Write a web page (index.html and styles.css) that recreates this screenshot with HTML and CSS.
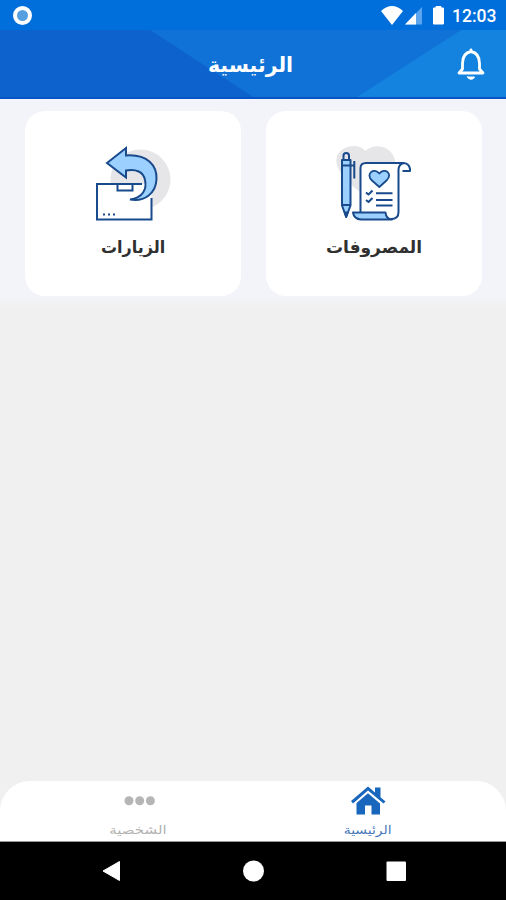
FILE: index.html
```html
<!DOCTYPE html>
<html lang="ar">
<head>
<meta charset="utf-8">
<title>الرئيسية</title>
<link rel="stylesheet" href="styles.css">
</head>
<body>
<div class="screen">
  <div class="status">
    <span class="record"></span>
    <div class="signals">
      <svg width="44" height="20" viewBox="380 5 44 20"><path d="M381 11Q392 1 403 11L392 25z" fill="#fff"/><path d="M405 24.500L422 7v17.500z" fill="#5ba4ee"/><path d="M405 24.500L416 13v11.500z" fill="#fff"/></svg>
      <svg width="13" height="20" viewBox="0 0 13 20"><path d="M1.500 3H4V1.500h5V3h2.500v16h-10z" fill="#fff" stroke="#fff" stroke-linejoin="round"/></svg>
      <span class="clock">12:03</span>
    </div>
  </div>
  <header class="header">
    <span></span>
    <h1 class="title"><span>الرئيسية</span></h1>
    <svg class="bell" width="30" height="34" viewBox="456 47 30 34" fill="none" stroke="#fff" stroke-width="2.800" stroke-linejoin="round" stroke-linecap="round"><path d="M462.500 69V63.500C462.500 56.500 465.500 52.500 471 51.500C476.500 52.500 479.500 56.500 479.500 63.500V69L483 73H459zM471 50v1.500"/><path d="M467.500 77h7c-1 3-6 3-7 0z" fill="#fff" stroke-width="1"/></svg>
  </header>
  <main class="cards">
    <section class="card">
      <svg width="90" height="84" viewBox="88 140 90 84">
        <circle cx="140.500" cy="179.500" r="30" fill="#e6e6e8"/>
        <path d="M97 184h54.500v35.500H97z" fill="#fff"/>
        <g fill="none" stroke="#184a8c" stroke-width="2">
          <path d="M142 184H97v35.500h54.500V198M117.500 184v6.500h15V184"/>
          <path d="M103 214.500h2m3 0h2m3 0h2"/>
          <path d="M107 163L126 148V155.500C148 154 157 166 156.500 179C156 193 145 202 130 199.500C143 198 147 189 145 180C143.500 172 136 168.500 126 170.500V177.500z" fill="#9cd0ff"/>
        </g>
      </svg>
      <h2 class="label visits"><span>الزيارات</span></h2>
    </section>
    <section class="card">
      <svg width="90" height="84" viewBox="330 140 90 84">
        <path d="M366.500 151C360 143 344 145 338.500 155C334 166 344 180 366.500 196C388 180 399 167 395 157C390 145 374 143 366.500 151z" fill="#e6e6e8"/>
        <g fill="none" stroke="#184a8c" stroke-width="2" stroke-linejoin="round">
          <path d="M404 163H366Q361.500 163 361.500 169V213H388L394 219Q399.500 217 399.500 211V169Q399.500 163 405 163z" fill="#fff" stroke="none"/>
          <path d="M361.500 212V168Q361.500 163 367 163H405Q399.500 164 399.500 170V212Q399.500 219 392 219M404 163Q410 163 411 169V171H403.500"/>
          <path d="M354 212.500H386.500Q387 219 393 219.500H362Q355 219 354 212.500z" fill="#9cd0ff"/>
          <path d="M380.300 187L373 180.500C366 174 375 167 380.300 173.500C386 167 394.500 174 387.500 180.500z" fill="#9cd0ff" stroke-width="1.800"/>
          <path d="M367 192.500l2.500 2 4-4M367 200l2.500 2 4-4M377 193.200h16.500M377 200h16.500M377 205.500h16.500"/>
          <path d="M343 160h8.500v45.500L347.200 217L343 205.500z" fill="#9cd0ff"/>
          <path d="M344.500 160V155.500Q344.500 153 347.200 153T350 155.500V160M343 165.500h12M355.300 161v17.500M343 205h8"/>
          <path d="M345 212h4.500L347.200 218z" fill="#184a8c" stroke-width="1"/>
        </g>
      </svg>
      <h2 class="label expenses"><span>المصروفات</span></h2>
    </section>
  </main>
  <div class="space"></div>
  <nav class="tabs">
    <div class="tab">
      <svg class="dots" width="36" height="32" viewBox="122 785 36 32" fill="#b5b5b5"><circle cx="129" cy="800.700" r="4.500"/><circle cx="139.700" cy="800.700" r="4.500"/><circle cx="150.400" cy="800.700" r="4.500"/></svg>
      <span class="tab-text personal"><span>الشخصية</span></span>
    </div>
    <div class="tab active">
      <svg width="36" height="32" viewBox="350 785 36 32" fill="#1967bd"><path d="M351 801L368 786.500L375 792.500V787.500H380.500V797.200L385.500 801.500L383.500 803.500L368 790.500L353 803.500z"/><path d="M356.500 803L368 793.300L380 803.500V814.500H371.500V805.500H365V814.500H356.500z"/></svg>
      <span class="tab-text home"><span>الرئيسية</span></span>
    </div>
  </nav>
  <footer class="system">
    <svg width="506" height="58" viewBox="0 842 506 58" fill="#fff"><path d="M103 871L119.500 861.500V880.500z" stroke="#fff" stroke-linejoin="round"/><circle cx="253.500" cy="871" r="10.500"/><rect x="386.500" y="861.500" width="19.500" height="19.500" rx="1"/></svg>
  </footer>
</div>
</body>
</html>
```
FILE: styles.css
```css
* { box-sizing: border-box; }
body { margin: 0; font-family: "DejaVu Sans", sans-serif; }
svg { display: block; flex: none; }
h1, h2 { margin: 0; }
.screen { width: 506px; height: 900px; display: flex; flex-direction: column; background: #f0f0f0; overflow: hidden; }
.status { height: 30px; flex: none; background: #006fdb; display: flex; justify-content: space-between; padding: 0 10px 0 13px; }
.record { width: 19px; height: 19px; margin-top: 6px; border: 4px solid #fff; border-radius: 50%; background: #559fe0; }
.signals { display: flex; padding-top: 5px; color: #fff; }
.signals svg + svg { margin-left: 8px; }
.clock { font: 500 17.5px/22px Roboto, sans-serif; width: 44px; margin-left: 7px; white-space: nowrap; }
.header { height: 69px; flex: none; display: grid; grid-template-columns: 1fr 120px 1fr; align-items: center; border-bottom: 2px solid #0755c5; background: #1071d6; position: relative; isolation: isolate; }
.header::before, .header::after { content: ""; position: absolute; inset: 0; z-index: -1; }
.header::before { background: #0d62ce; clip-path: polygon(0 0, 150px 0, 253px 100%, 0 100%); }
.header::after { background: #1482df; clip-path: polygon(461px 0, 100% 0, 100% 100%, 357px 100%); }
.title, .label, .tab-text { display: flex; justify-content: center; direction: rtl; white-space: nowrap; }
.title { color: #fff; font-size: 20.5px; line-height: 30px; font-weight: 700; margin: 2px 5px 0 0; }
.bell { justify-self: end; margin-right: 20px; }
.cards { height: 209px; flex: none; background: linear-gradient(#f3f4f9 94%, #f0f0f0); padding: 12px 24px 12px 25px; display: grid; grid-template-columns: 216px 216px; justify-content: space-between; }
.card { height: 185px; border-radius: 20px; background: #fff; display: flex; flex-direction: column; align-items: center; padding-top: 29px; }
.label { color: #303030; font-size: 17px; line-height: 24px; font-weight: 700; margin-top: 11px; }
.visits { transform: scaleX(.94); }
.space { flex: 1; }
.tabs { height: 61px; flex: none; background: #fff; border-radius: 30px 30px 0 0; border-bottom: 1px solid #999; display: flex; padding: 4px 23px 0 22px; }
.tab { flex: 1; display: flex; flex-direction: column; align-items: center; color: #b2b2b2; }
.active { color: #4878ba; }
.dots { margin-left: 6px; }
.tab-text { font-size: 12px; line-height: 18px; margin-top: 4px; }
.personal { margin-left: 2px; transform: scaleX(1.25); }
.home { transform: scaleX(1.16); }
.system { height: 58px; flex: none; background: #000; }
```
